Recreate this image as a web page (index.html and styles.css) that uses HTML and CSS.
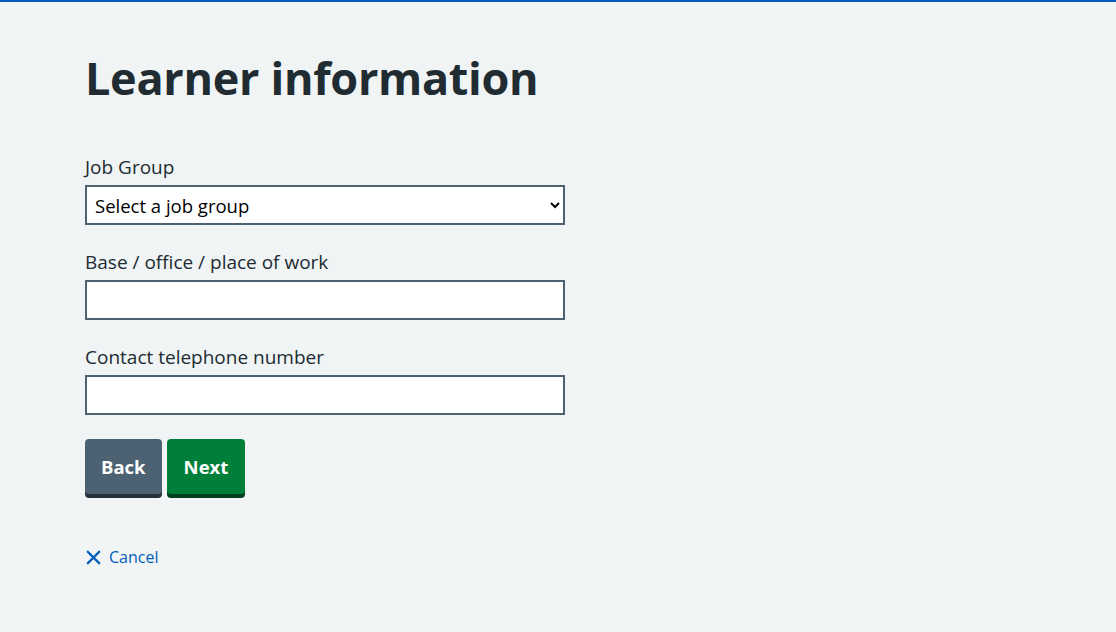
FILE: index.html
```html
<!DOCTYPE html>
<html lang="en">
<head>
<meta charset="utf-8">
<title>Learner information</title>
<link rel="stylesheet" href="styles.css">
</head>
<body>
<main class="page">
  <h1 class="heading">Learner information</h1>
  <form class="form">
    <div class="form-group">
      <label class="label" for="job">Job Group</label>
      <select class="select" id="job">
        <option>Select a job group</option>
      </select>
    </div>
    <div class="form-group">
      <label class="label" for="base">Base / office / place of work</label>
      <input class="input" id="base" type="text">
    </div>
    <div class="form-group">
      <label class="label" for="tel">Contact telephone number</label>
      <input class="input" id="tel" type="text">
    </div>
    <div class="actions">
      <button type="button" class="button button-secondary">Back</button>
      <button type="button" class="button button-primary">Next</button>
    </div>
  </form>
  <a class="cancel" href="#">
    <svg class="cancel-icon" viewBox="0 0 16 16" width="16" height="16" aria-hidden="true"><path d="M2 2L14 14M14 2L2 14" stroke="#005eb8" stroke-width="2" fill="none"/></svg>
    <span>Cancel</span>
  </a>
</main>
</body>
</html>
```
FILE: styles.css
```css
html, body {
  margin: 0;
  padding: 0;
  background: #f0f4f5;
  height: 100%;
}
body {
  border-top: 2px solid #005eb8;
  box-sizing: border-box;
  font-family: "Open Sans", "Noto Sans", Arial, sans-serif;
  color: #212b32;
}
.page {
  padding: 48px 0 0 85px;
  width: 480px;
}
.heading {
  margin: 0 0 48px;
  font-size: 45px;
  line-height: 56px;
  font-weight: 700;
  letter-spacing: -0.3px;
}
.form-group {
  margin-bottom: 24px;
  display: flex;
  flex-direction: column;
}
.label {
  font-size: 19px;
  line-height: 27px;
  margin-bottom: 4px;
}
.select, .input {
  box-sizing: border-box;
  width: 480px;
  height: 40px;
  border: 2px solid #4c6272;
  background: #fff;
  border-radius: 0;
  font-family: inherit;
  font-size: 18.5px;
  color: #000;
  margin: 0;
}
.select {
  padding: 0 0 0 4px;
}
.input {
  padding: 0 8px;
}
.actions {
  display: flex;
  gap: 5px;
}
.button {
  border: 0;
  border-radius: 4px;
  background: #007f3b;
  box-shadow: 0 4px 0 #00401e;
  color: #fff;
  font-family: inherit;
  font-weight: 700;
  font-size: 18.5px;
  line-height: 25px;
  height: 55px;
  padding: 0 16px;
  cursor: pointer;
}
.button-primary {
  padding: 0 17px;
}
.button-secondary {
  background: #4c6272;
  box-shadow: 0 4px 0 #263139;
}
.cancel {
  display: inline-flex;
  align-items: center;
  gap: 7px;
  margin-top: 53px;
  color: #005eb8;
  text-decoration: none;
  font-size: 16px;
  line-height: 20px;
}
.cancel-icon {
  width: 17px;
  height: 17px;
}
```
